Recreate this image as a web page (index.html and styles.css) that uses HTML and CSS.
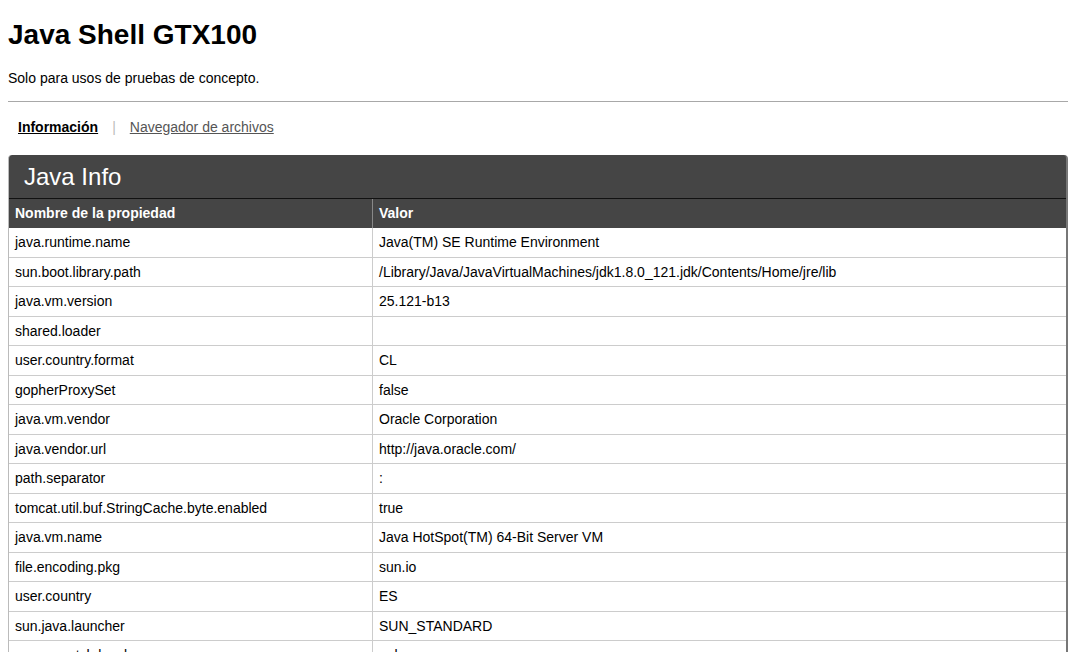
FILE: index.html
```html
<!DOCTYPE html>
<html lang="es">
<head>
<meta charset="utf-8">
<title>Java Shell GTX100</title>
<link rel="stylesheet" href="styles.css">
</head>
<body>
<h1 class="title">Java Shell GTX100</h1>
<p class="subtitle">Solo para usos de pruebas de concepto.</p>
<hr class="rule">
<nav class="tabs">
  <a class="tab active" href="#">Información</a>
  <span class="sep">|</span>
  <a class="tab" href="#">Navegador de archivos</a>
</nav>
<section class="panel">
  <h2 class="panel-title">Java Info</h2>
  <table class="props">
    <thead>
      <tr><th class="col-name">Nombre de la propiedad</th><th>Valor</th></tr>
    </thead>
    <tbody>
      <tr><td>java.runtime.name</td><td>Java(TM) SE Runtime Environment</td></tr>
      <tr><td>sun.boot.library.path</td><td>/Library/Java/JavaVirtualMachines/jdk1.8.0_121.jdk/Contents/Home/jre/lib</td></tr>
      <tr><td>java.vm.version</td><td>25.121-b13</td></tr>
      <tr><td>shared.loader</td><td></td></tr>
      <tr><td>user.country.format</td><td>CL</td></tr>
      <tr><td>gopherProxySet</td><td>false</td></tr>
      <tr><td>java.vm.vendor</td><td>Oracle Corporation</td></tr>
      <tr><td>java.vendor.url</td><td>http://java.oracle.com/</td></tr>
      <tr><td>path.separator</td><td>:</td></tr>
      <tr><td>tomcat.util.buf.StringCache.byte.enabled</td><td>true</td></tr>
      <tr><td>java.vm.name</td><td>Java HotSpot(TM) 64-Bit Server VM</td></tr>
      <tr><td>file.encoding.pkg</td><td>sun.io</td></tr>
      <tr><td>user.country</td><td>ES</td></tr>
      <tr><td>sun.java.launcher</td><td>SUN_STANDARD</td></tr>
      <tr><td>sun.os.patch.level</td><td>unknown</td></tr>
      <tr><td>java.vm.specification.name</td><td>Java Virtual Machine Specification</td></tr>
    </tbody>
  </table>
</section>
</body>
</html>
```
FILE: styles.css
```css
html, body {
  margin: 0;
  padding: 0;
  background: #fff;
}
body {
  padding: 0 8px;
  font-family: "Liberation Sans", Arial, Helvetica, sans-serif;
  font-size: 14px;
  color: #000;
}
.title {
  margin: 0;
  padding-top: 19px;
  font-size: 28px;
  line-height: 32px;
  font-weight: bold;
}
.subtitle {
  margin: 19px 0 0;
  font-size: 14px;
  line-height: 16px;
}
.rule {
  margin: 15px 0 0;
  border: 0;
  border-top: 1px solid #a8a8a8;
  height: 0;
}
.tabs {
  display: flex;
  align-items: center;
  padding: 15px 0 0 10px;
  height: 19px;
  font-size: 14px;
  line-height: 16px;
}
.tab {
  color: #555;
  text-decoration: underline;
}
.tab.active {
  color: #000;
  font-weight: bold;
}
.sep {
  color: #bbb;
  margin: 0 14px;
}
.panel {
  margin-top: 19px;
  border-radius: 4px 4px 0 0;
  background: #454545;
  border-right: 2px solid #777;
  border-left: 1px solid #bbb;
  overflow: hidden;
}
.panel-title {
  margin: 0;
  padding: 8px 15px 0;
  height: 35px;
  color: #fff;
  font-size: 24px;
  line-height: 28px;
  font-weight: normal;
  border-bottom: 1px solid #111;
}
.props {
  width: 100%;
  border-collapse: collapse;
  background: #fff;
}
.props th {
  background: #454545;
  color: #fff;
  font-weight: bold;
  text-align: left;
  font-size: 14px;
  line-height: 16px;
  padding: 6px 6px 7px;
  border-left: 1px solid #888;
}
.props th:first-child,
.props td:first-child {
  border-left: 0;
}
.props .col-name {
  width: 351px;
}
.props td {
  font-size: 14px;
  line-height: 16.5px;
  padding: 6px 6px 6px;
  border-bottom: 1px solid #ccc;
  border-left: 1px solid #ccc;
  height: 16.5px;
}
```
